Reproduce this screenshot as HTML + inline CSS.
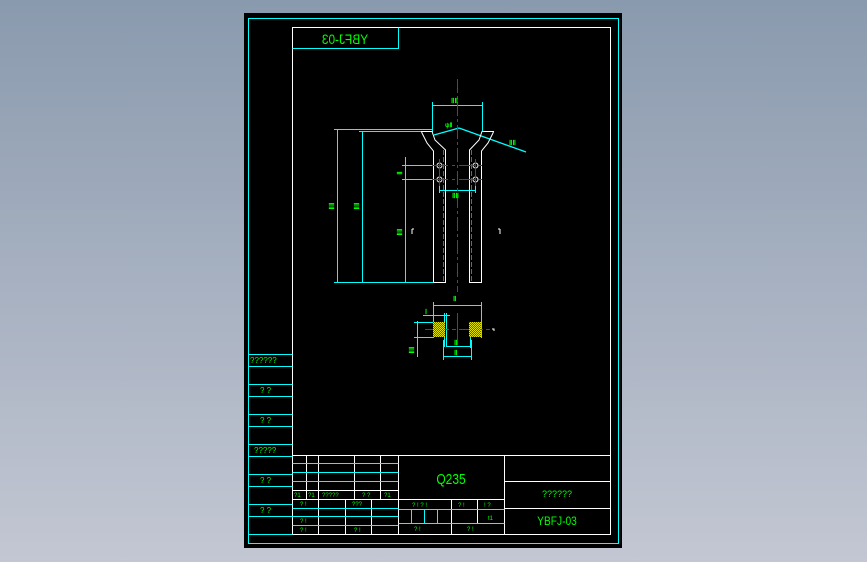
<!DOCTYPE html>
<html><head><meta charset="utf-8"><style>
html,body{margin:0;padding:0;width:867px;height:562px;overflow:hidden;background:linear-gradient(#8a9aae,#c3c7d3);}
svg{position:absolute;left:0;top:0}
text{font-family:"Liberation Sans Narrow","Liberation Sans",sans-serif;fill:#00ff00}
</style></head><body>
<svg width="867" height="562" viewBox="0 0 867 562">
<defs>
<pattern id="h" width="2" height="2" patternUnits="userSpaceOnUse"><rect width="2" height="2" fill="#ffff00"/><path d="M0 2L2 0" stroke="#000" stroke-width="0.6"/></pattern>
</defs>
<rect x="244" y="13" width="378" height="535" fill="#000"/>
<g fill="none" stroke="#00ffff" stroke-width="1">
<rect x="248.5" y="18.5" width="370" height="525"/>
</g>
<g fill="none" stroke="#ffffff" stroke-width="1">
<rect x="292.5" y="27.5" width="318" height="507"/>
<line x1="292.5" y1="455.5" x2="610.5" y2="455.5"/>
<line x1="398.5" y1="455.5" x2="398.5" y2="534.5"/>
<line x1="504.5" y1="455.5" x2="504.5" y2="534.5"/>
<line x1="504.5" y1="481.5" x2="610.5" y2="481.5"/>
<line x1="504.5" y1="508.5" x2="610.5" y2="508.5"/>
<line x1="398.5" y1="499.5" x2="504.5" y2="499.5"/>
<line x1="292.5" y1="490.5" x2="398.5" y2="490.5"/>
<line x1="292.5" y1="499.5" x2="398.5" y2="499.5"/>
<line x1="306.5" y1="455.5" x2="306.5" y2="499.5"/>
<line x1="318.5" y1="455.5" x2="318.5" y2="534.5"/>
<line x1="354.5" y1="455.5" x2="354.5" y2="499.5"/>
<line x1="380.5" y1="455.5" x2="380.5" y2="499.5"/>
<line x1="345.5" y1="499.5" x2="345.5" y2="534.5"/>
<line x1="371.5" y1="499.5" x2="371.5" y2="534.5"/>
<line x1="451.5" y1="499.5" x2="451.5" y2="534.5"/>
<line x1="477.5" y1="499.5" x2="477.5" y2="523.5"/>
</g>
<g fill="none" stroke="#00ffff" stroke-width="1">
<polyline points="292.5,48.5 398.5,48.5 398.5,27.5"/>
<line x1="248.5" y1="354.5" x2="292.5" y2="354.5"/><line x1="248.5" y1="366.5" x2="292.5" y2="366.5"/>
<line x1="248.5" y1="384.5" x2="292.5" y2="384.5"/><line x1="248.5" y1="396.5" x2="292.5" y2="396.5"/>
<line x1="248.5" y1="414.5" x2="292.5" y2="414.5"/><line x1="248.5" y1="426.5" x2="292.5" y2="426.5"/>
<line x1="248.5" y1="444.5" x2="292.5" y2="444.5"/><line x1="248.5" y1="456.5" x2="292.5" y2="456.5"/>
<line x1="248.5" y1="474.5" x2="292.5" y2="474.5"/><line x1="248.5" y1="486.5" x2="292.5" y2="486.5"/>
<line x1="248.5" y1="504.5" x2="292.5" y2="504.5"/><line x1="248.5" y1="516.5" x2="292.5" y2="516.5"/>
<line x1="248.5" y1="534.5" x2="292.5" y2="534.5"/>
<line x1="292.5" y1="463.5" x2="398.5" y2="463.5"/><line x1="292.5" y1="472.5" x2="398.5" y2="472.5"/><line x1="292.5" y1="481.5" x2="398.5" y2="481.5"/>
<line x1="292.5" y1="508.5" x2="398.5" y2="508.5"/><line x1="292.5" y1="516.5" x2="398.5" y2="516.5"/><line x1="292.5" y1="525.5" x2="398.5" y2="525.5"/>
<line x1="398.5" y1="509.5" x2="504.5" y2="509.5"/><line x1="398.5" y1="523.5" x2="504.5" y2="523.5"/>
<line x1="411.5" y1="509.5" x2="411.5" y2="523.5"/><line x1="424.5" y1="509.5" x2="424.5" y2="523.5"/><line x1="437.5" y1="509.5" x2="437.5" y2="523.5"/>
<line x1="334" y1="129.5" x2="433" y2="129.5"/>
<line x1="359" y1="131.5" x2="433" y2="131.5"/>
<line x1="334" y1="282.5" x2="433" y2="282.5"/>
<line x1="337.5" y1="129" x2="337.5" y2="282"/>
<line x1="362.5" y1="131" x2="362.5" y2="282"/>
<line x1="405.5" y1="157" x2="405.5" y2="282"/>
<line x1="402" y1="165.5" x2="433" y2="165.5"/><line x1="402" y1="179.5" x2="433" y2="179.5"/>
<line x1="432.5" y1="102" x2="432.5" y2="131"/><line x1="482.5" y1="102" x2="482.5" y2="131"/>
<line x1="432.5" y1="105.5" x2="482.5" y2="105.5"/>
<line x1="434" y1="135" x2="459" y2="128" stroke-width="1.3"/>
<line x1="459" y1="128" x2="526" y2="152" stroke-width="1.3"/>
<line x1="439.5" y1="173" x2="439.5" y2="193"/><line x1="475.5" y1="173" x2="475.5" y2="193"/>
<line x1="439.5" y1="190.5" x2="475.5" y2="190.5"/>
<line x1="433.5" y1="302" x2="433.5" y2="338"/><line x1="481.5" y1="302" x2="481.5" y2="338"/>
<line x1="433.5" y1="305.5" x2="481.5" y2="305.5"/>
<line x1="423" y1="315.5" x2="450" y2="315.5"/>
<line x1="444.5" y1="313" x2="444.5" y2="347"/><line x1="446.5" y1="313" x2="446.5" y2="347"/>
<line x1="470.5" y1="330" x2="470.5" y2="348"/>
<line x1="446" y1="346.5" x2="470" y2="346.5"/>
<line x1="443.5" y1="340" x2="443.5" y2="360"/><line x1="471.5" y1="340" x2="471.5" y2="360"/>
<line x1="443" y1="356.5" x2="472" y2="356.5"/>
<line x1="414" y1="322.5" x2="434" y2="322.5"/><line x1="414" y1="337.5" x2="434" y2="337.5"/>
<line x1="417.5" y1="321" x2="417.5" y2="357"/>
</g>
<g fill="none" stroke="#ffffff" stroke-width="1">
<path d="M433.5,282.5V151 L427,143 L422,133 L421.5,131.5 H432 L435,140 L445.5,150 V282.5"/>
<path d="M481.5,282.5V151 L488,143 L493,133 L493.5,131.5 H482 L479,140 L469.5,150 V282.5"/>
<line x1="433" y1="282.5" x2="446" y2="282.5"/><line x1="469" y1="282.5" x2="482" y2="282.5"/>
<circle cx="439.5" cy="165.5" r="2.5"/><circle cx="475.5" cy="165.5" r="2.5"/>
<circle cx="439.5" cy="179.5" r="2.5"/><circle cx="475.5" cy="179.5" r="2.5"/>
<path d="M412,229v5M412,229h2M500,229v5M500,229h-2"/>
<path d="M492,329h2v2"/>
</g>
<g stroke="#ff00ff" stroke-width="1" stroke-dasharray="5,2">
<line x1="443.5" y1="150" x2="443.5" y2="282"/><line x1="471.5" y1="150" x2="471.5" y2="282"/>
</g>
<g stroke="#ff0000" stroke-width="1">
<line x1="457.5" y1="79" x2="457.5" y2="292" stroke-dasharray="14,3,3,3"/>
<line x1="457.5" y1="313" x2="457.5" y2="345"/>
<line x1="432" y1="165.5" x2="484" y2="165.5" stroke-dasharray="16,4,3,4"/>
<line x1="432" y1="179.5" x2="484" y2="179.5" stroke-dasharray="16,4,3,4"/>
<line x1="439.5" y1="159" x2="439.5" y2="186"/><line x1="475.5" y1="159" x2="475.5" y2="186"/>
<line x1="425" y1="329.5" x2="490" y2="329.5" stroke-dasharray="24,3,4,3"/>
</g>
<rect x="433" y="322" width="12" height="15" fill="url(#h)"/>
<rect x="469" y="322" width="12" height="15" fill="url(#h)"/>
<g font-size="7" font-weight="bold">
<text x="451" y="103">ⅡⅡ</text>
<text x="445" y="127" font-size="6">ψⅡ</text>
<text x="509" y="145">ⅡⅡ</text>
<text x="452" y="198">ⅡⅡ</text>
<text x="453" y="301">Ⅱ</text>
<text x="454" y="345">Ⅱ</text>
<text x="454" y="355">Ⅱ</text>
<text transform="translate(334,206) rotate(-90)" text-anchor="middle">ⅡⅡ</text>
<text transform="translate(359,206) rotate(-90)" text-anchor="middle">ⅡⅡ</text>
<text transform="translate(402,232) rotate(-90)" text-anchor="middle">ⅡⅡ</text>
<text transform="translate(402,173) rotate(-90)" text-anchor="middle">Ⅱ</text>
<text transform="translate(414,350) rotate(-90)" text-anchor="middle">ⅡⅡ</text>
<text x="425" y="314">Ⅰ</text>
</g>
<text x="0" y="0" font-size="14" text-anchor="middle" transform="translate(345,44) scale(-0.85,1)">YBFJ-03</text>
<text x="0" y="0" font-size="15" text-anchor="middle" transform="translate(451,484) scale(0.8,1)">Q235</text>
<text x="557" y="497" font-size="9" text-anchor="middle">??????</text>
<text x="0" y="0" font-size="12" text-anchor="middle" transform="translate(557,525) scale(0.85,1)">YBFJ-03</text>
<g font-size="8">
<text x="250" y="363">??????</text>
<text x="260" y="393">?  ?</text>
<text x="260" y="423">?  ?</text>
<text x="254" y="453">?????</text>
<text x="260" y="483">?  ?</text>
<text x="260" y="513">?  ?</text>
</g>
<g font-size="6">
<text x="294" y="497">?1</text><text x="308" y="497">?1</text><text x="322" y="497">?????</text><text x="362" y="497">? ?</text><text x="384" y="497">?1</text>
<text x="300" y="506">? !</text><text x="352" y="506">???</text>
<text x="300" y="523">? !</text><text x="300" y="532">? !</text><text x="354" y="532">? !</text>
<text x="412" y="507">? ! ? !</text><text x="458" y="507">? !</text><text x="484" y="507">! ?</text>
<text x="488" y="520">t1</text>
<text x="414" y="531">?    !</text><text x="467" y="531">?    !</text>
</g>
</svg>
</body></html>
